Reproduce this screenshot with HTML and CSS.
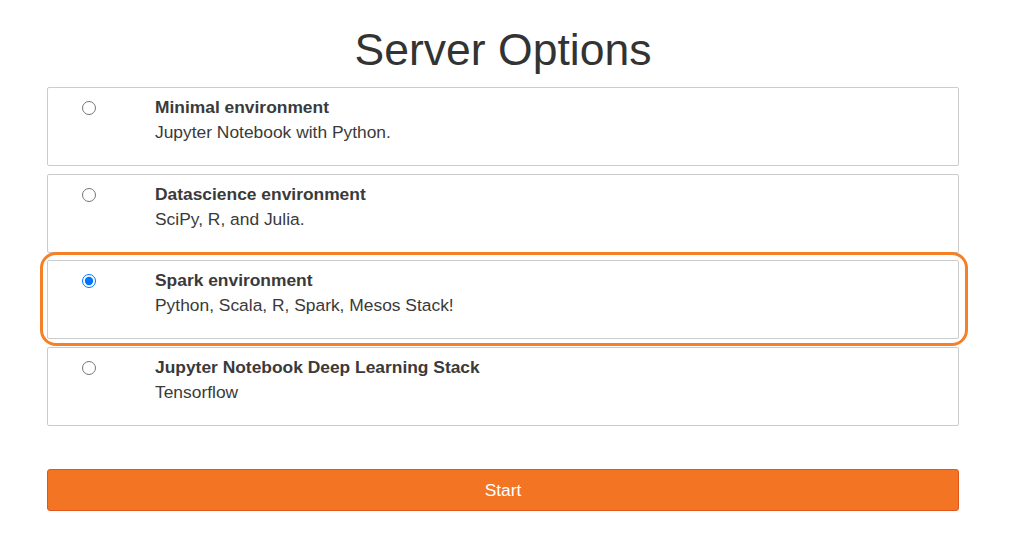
FILE: index.html
```html
<!DOCTYPE html>
<html>
<head>
<meta charset="utf-8">
<link rel="stylesheet" href="styles.css">
</head>
<body>
<div class="page">
  <h1 class="title">Server Options</h1>
  <form class="options">
    <label class="card">
      <input type="radio" name="profile" class="radio">
      <div class="text">
        <div class="name">Minimal environment</div>
        <div class="desc">Jupyter Notebook with Python.</div>
      </div>
    </label>
    <label class="card">
      <input type="radio" name="profile" class="radio">
      <div class="text">
        <div class="name">Datascience environment</div>
        <div class="desc">SciPy, R, and Julia.</div>
      </div>
    </label>
    <label class="card selected">
      <input type="radio" name="profile" class="radio" checked>
      <div class="text">
        <div class="name">Spark environment</div>
        <div class="desc">Python, Scala, R, Spark, Mesos Stack!</div>
      </div>
    </label>
    <label class="card">
      <input type="radio" name="profile" class="radio">
      <div class="text">
        <div class="name">Jupyter Notebook Deep Learning Stack</div>
        <div class="desc">Tensorflow</div>
      </div>
    </label>
    <button type="button" class="start">Start</button>
  </form>
</div>
</body>
</html>
```

FILE: styles.css
```css
html, body {
  margin: 0;
  padding: 0;
  background: #fff;
}
body {
  font-family: "Liberation Sans", Arial, sans-serif;
  color: #333;
}
.page {
  width: 912px;
  margin-left: 47px;
}
.title {
  margin: 25px 0 13px;
  font-size: 44.5px;
  line-height: 49px;
  font-weight: 400;
  text-align: center;
  color: #333;
}
.options {
  display: flex;
  flex-direction: column;
  gap: 7.7px;
}
.card {
  position: relative;
  box-sizing: border-box;
  height: 79px;
  border: 1px solid #ccc;
  border-radius: 2px;
  padding: 7px 0 0 0;
  display: flex;
  align-items: flex-start;
}
.card.selected::after {
  content: "";
  position: absolute;
  top: -9px;
  left: -8px;
  right: -10px;
  bottom: -8px;
  border: 3px solid #f58025;
  border-radius: 16px;
  pointer-events: none;
}
.radio {
  margin: 6px 0 0 34px;
  width: 14px;
  height: 14px;
  flex: none;
}
.text {
  margin-left: 59px;
  font-size: 17.4px;
  line-height: 25px;
}
.name {
  font-weight: 700;
  color: #3a3a3a;
}
.desc {
  color: #3a3a3a;
}
.start {
  margin-top: 35.3px;
  height: 42px;
  width: 100%;
  box-sizing: border-box;
  border: 1px solid #e0561c;
  border-radius: 3px;
  background: #f37524;
  color: #fff;
  font-family: "Liberation Sans", Arial, sans-serif;
  font-size: 17.4px;
  padding: 0;
}
```
